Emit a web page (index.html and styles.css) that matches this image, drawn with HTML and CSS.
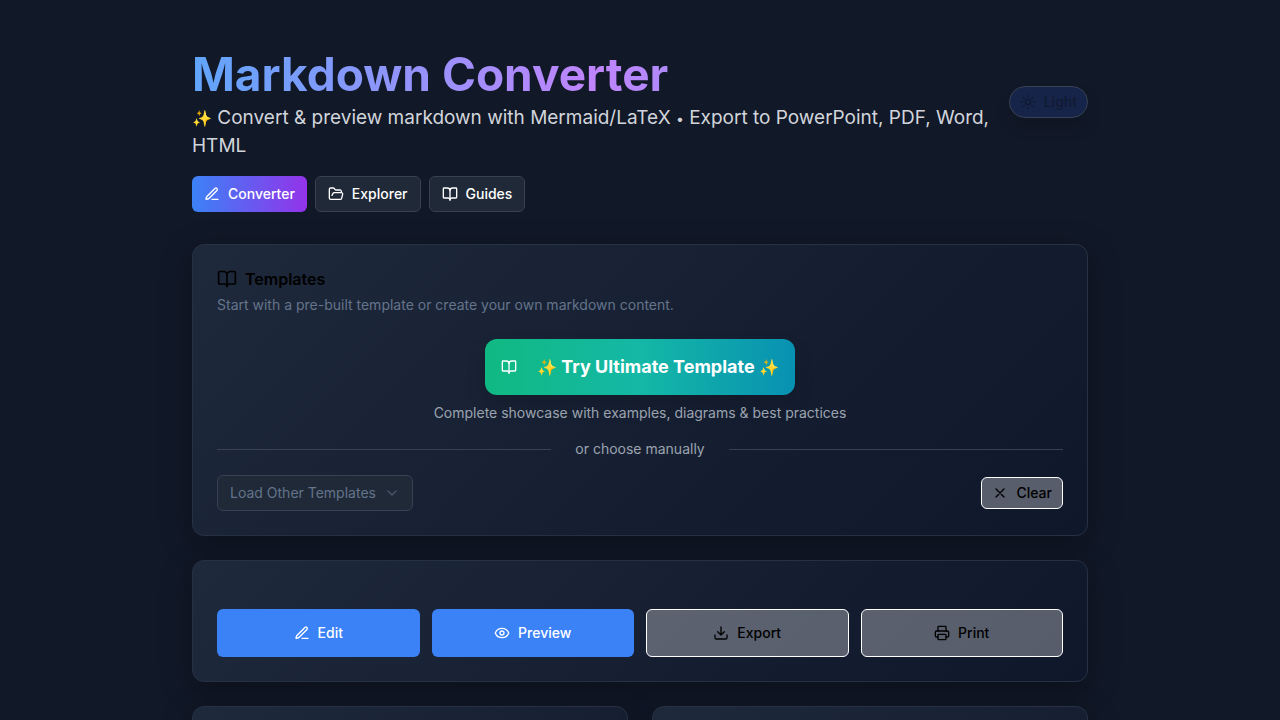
FILE: index.html
```html
<!DOCTYPE html>
<html lang="en">
<head>
<meta charset="utf-8">
<meta name="viewport" content="width=device-width, initial-scale=1">
<title>Markdown Converter</title>
<link rel="stylesheet" href="styles.css">
</head>
<body>
<svg class="sprite" aria-hidden="true">
  <symbol id="pen" viewBox="0 0 24 24"><path d="M12 20h9"/><path d="M16.376 3.622a1 1 0 0 1 3.002 3.002L7.368 18.635a2 2 0 0 1-.855.506l-2.872.838a.5.5 0 0 1-.62-.62l.838-2.872a2 2 0 0 1 .506-.854z"/></symbol>
  <symbol id="folder" viewBox="0 0 24 24"><path d="m6 14 1.5-2.9A2 2 0 0 1 9.24 10H20a2 2 0 0 1 1.94 2.5l-1.54 6a2 2 0 0 1-1.95 1.5H4a2 2 0 0 1-2-2V5a2 2 0 0 1 2-2h3.9a2 2 0 0 1 1.69.9l.81 1.2a2 2 0 0 0 1.67.9H18a2 2 0 0 1 2 2v2"/></symbol>
  <symbol id="book" viewBox="0 0 24 24"><path d="M12 7v14"/><path d="M3 18a1 1 0 0 1-1-1V4a1 1 0 0 1 1-1h5a4 4 0 0 1 4 4 4 4 0 0 1 4-4h5a1 1 0 0 1 1 1v13a1 1 0 0 1-1 1h-6a3 3 0 0 0-3 3 3 3 0 0 0-3-3z"/></symbol>
  <symbol id="sun" viewBox="0 0 24 24"><circle cx="12" cy="12" r="4"/><path d="M12 2v2M12 20v2M4.93 4.93l1.41 1.41M17.66 17.66l1.41 1.41M2 12h2M20 12h2M6.34 17.66l-1.41 1.41M19.07 4.93l-1.41 1.41"/></symbol>
  <symbol id="chevron" viewBox="0 0 24 24"><path d="m6 9 6 6 6-6"/></symbol>
  <symbol id="close" viewBox="0 0 24 24"><path d="M18 6 6 18M6 6l12 12"/></symbol>
  <symbol id="eye" viewBox="0 0 24 24"><path d="M2.062 12.348a1 1 0 0 1 0-.696 10.75 10.75 0 0 1 19.876 0 1 1 0 0 1 0 .696 10.75 10.75 0 0 1-19.876 0"/><circle cx="12" cy="12" r="3"/></symbol>
  <symbol id="download" viewBox="0 0 24 24"><path d="M21 15v4a2 2 0 0 1-2 2H5a2 2 0 0 1-2-2v-4M7 10l5 5 5-5M12 15V3"/></symbol>
  <symbol id="printer" viewBox="0 0 24 24"><path d="M6 18H4a2 2 0 0 1-2-2v-5a2 2 0 0 1 2-2h16a2 2 0 0 1 2 2v5a2 2 0 0 1-2 2h-2"/><path d="M6 9V3a1 1 0 0 1 1-1h10a1 1 0 0 1 1 1v6"/><rect x="6" y="14" width="12" height="8" rx="1"/></symbol>
</svg>
<main class="page">
  <header class="header">
    <div class="masthead">
      <div class="intro">
        <h1 class="title">Markdown Converter</h1>
        <p class="tagline"><span class="glyph">✨</span> Convert &amp; preview markdown with Mermaid/LaTeX <span class="dot">•</span> Export to PowerPoint, PDF, Word, HTML</p>
      </div>
      <button class="theme" type="button"><svg class="icon"><use href="#sun"/></svg>Light</button>
    </div>
    <nav class="nav">
      <a class="tab tab-active" href="#converter"><svg class="icon"><use href="#pen"/></svg>Converter</a>
      <a class="tab" href="#explorer"><svg class="icon"><use href="#folder"/></svg>Explorer</a>
      <a class="tab" href="#guides"><svg class="icon"><use href="#book"/></svg>Guides</a>
    </nav>
  </header>

  <section class="card" id="converter">
    <h2 class="card-title"><svg class="icon icon-large"><use href="#book"/></svg>Templates</h2>
    <p class="card-text">Start with a pre-built template or create your own markdown content.</p>
    <div class="showcase">
      <button class="ultimate" type="button"><svg class="icon"><use href="#book"/></svg><span><span class="glyph">✨</span> Try Ultimate Template <span class="glyph">✨</span></span></button>
      <p class="caption">Complete showcase with examples, diagrams &amp; best practices</p>
    </div>
    <div class="divider">or choose manually</div>
    <div class="manual">
      <button class="picker" type="button" disabled>Load Other Templates<svg class="icon"><use href="#chevron"/></svg></button>
      <button class="plain clear" type="button"><svg class="icon"><use href="#close"/></svg>Clear</button>
    </div>
  </section>

  <section class="card actions">
    <button class="action primary" type="button"><svg class="icon"><use href="#pen"/></svg>Edit</button>
    <button class="action primary" type="button"><svg class="icon"><use href="#eye"/></svg>Preview</button>
    <button class="action plain" type="button"><svg class="icon"><use href="#download"/></svg>Export</button>
    <button class="action plain" type="button"><svg class="icon"><use href="#printer"/></svg>Print</button>
  </section>

  <div class="panes">
    <section class="card pane"></section>
    <section class="card pane"></section>
  </div>
</main>
</body>
</html>
```
FILE: styles.css
```css
* { box-sizing: border-box; }
html { scrollbar-width: none; }
body {
  margin: 0;
  background: #111827;
  color: #000;
  font-family: Inter, "Liberation Sans", sans-serif;
  font-size: 14px;
  line-height: 20px;
}
h1, h2, p { margin: 0; }
button { font: inherit; font-weight: 500; cursor: pointer; }
.sprite { display: none; }
.icon {
  width: 16px;
  height: 16px;
  flex: none;
  fill: none;
  stroke: currentColor;
  stroke-width: 2;
  stroke-linecap: round;
  stroke-linejoin: round;
}
.icon-large { width: 20px; height: 20px; }
.glyph { font-size: 16px; line-height: 1; }
.dot { font-size: 14px; line-height: 1; }

.page {
  display: flex;
  flex-direction: column;
  gap: 24px;
  max-width: 896px;
  margin: 0 auto;
  padding: 44px 0 24px;
}
.header { display: flex; flex-direction: column; gap: 16px; margin-bottom: 8px; }
.masthead { display: flex; align-items: center; gap: 8px; }
.intro { flex: 1; }
.title {
  font-size: 46px;
  line-height: 60px;
  font-weight: 700;
  color: transparent;
  background: linear-gradient(to right, #60a5fa, #c084fc, #60a5fa);
  background-clip: text;
  -webkit-background-clip: text;
}
.tagline { font-size: 19px; line-height: 28px; color: #d1d5db; }
.theme {
  display: flex;
  align-items: center;
  gap: 8px;
  height: 32px;
  padding: 0 10px;
  border: 1px solid #374151;
  border-radius: 16px;
  background: #172449;
  color: #111a33;
  box-shadow: 0 10px 16px rgba(0, 0, 0, .12);
}
.nav { display: flex; gap: 8px; }
.tab {
  display: flex;
  align-items: center;
  gap: 8px;
  height: 36px;
  padding: 0 12px;
  border: 1px solid #374151;
  border-radius: 6px;
  background: #1f2937;
  color: #fff;
  font-weight: 500;
  text-decoration: none;
}
.tab-active { border: 0; background: linear-gradient(to right, #3b82f6, #9333ea); }

.card {
  padding: 24px;
  border: 1px solid #263244;
  border-radius: 12px;
  background: linear-gradient(135deg, #1e293b, #0f172a);
  box-shadow: 0 8px 32px rgba(0, 0, 0, .3);
}
.card-title { display: flex; align-items: center; gap: 8px; font-size: 16px; line-height: 20px; font-weight: 600; }
.card-text { margin-top: 6px; color: #64748b; }
.showcase { display: flex; flex-direction: column; align-items: center; gap: 8px; margin-top: 24px; }
.ultimate {
  display: flex;
  align-items: center;
  gap: 20px;
  height: 56px;
  padding: 0 16px;
  border: 0;
  border-radius: 12px;
  background: linear-gradient(to right, #10b981, #14b8a6, #0891b2);
  color: #fff;
  font-size: 18px;
  font-weight: 700;
  box-shadow: 0 10px 20px rgba(0, 0, 0, .15);
}
.caption { color: #9ca3af; }
.divider { display: flex; align-items: center; gap: 24px; margin: 16px 0; color: #9ca3af; }
.divider::before, .divider::after { content: ""; flex: 1; height: 1px; background: #374151; }
.manual { display: flex; align-items: center; justify-content: space-between; }
.picker {
  display: flex;
  align-items: center;
  gap: 8px;
  height: 36px;
  padding: 0 12px;
  border: 1px solid #374151;
  border-radius: 6px;
  background: #1f2937;
  color: #64748b;
  font-weight: 400;
}
.picker .icon { opacity: .6; }
.plain { border: 1px solid #fff; background: rgba(255, 255, 255, .3); color: #000; }
.clear { display: flex; align-items: center; gap: 8px; height: 32px; padding: 0 10px; border-radius: 6px; }

.actions { display: grid; grid-template-columns: repeat(4, 1fr); gap: 12px; padding-top: 48px; }
.action { display: flex; align-items: center; justify-content: center; gap: 8px; height: 48px; border-radius: 6px; }
.primary { border: 0; background: #3b82f6; color: #fff; }

.panes { display: grid; grid-template-columns: 1fr 1fr; gap: 24px; }
.pane { min-height: 400px; }
```
